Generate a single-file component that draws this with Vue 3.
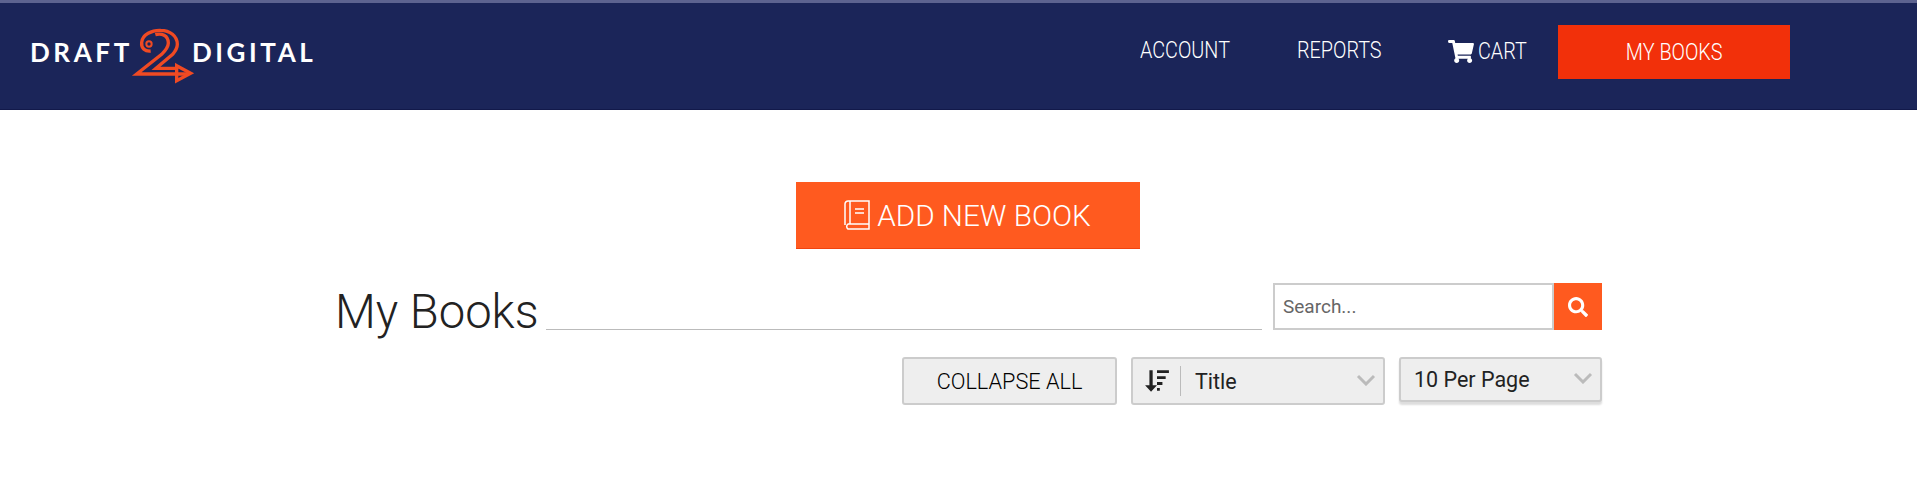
<template>
  <div class="page">
    <header class="navbar">
      <a class="logo" href="#">
        <span class="logo-word">DRAFT</span>
        <svg class="logo-mark" viewBox="0 0 240 210" width="80" height="70" fill="none" stroke="#f04a23" stroke-width="10">
          <circle cx="87" cy="75" r="8" stroke-width="6" />
          <path d="M92 96C76 98 63 88 65 70C67 46 96 33 122 34C150 34 172 52 172 76C172 90 165 98 158 106L108 148H170" />
          <path d="M106 47C124 42 145 48 145 72C145 86 135 96 125 106L50 165H205" />
          <path d="M170 140L212 163L170 185Z" />
        </svg>
        <span class="logo-word">DIGITAL</span>
      </a>
      <nav class="nav-links">
        <a class="nav-link" href="#"><span class="squeeze">ACCOUNT</span></a>
        <a class="nav-link" href="#"><span class="squeeze">REPORTS</span></a>
        <a class="nav-link cart" href="#">
          <svg viewBox="0 0 576 512" width="26" height="23" fill="#fff"><path :d="cartPath" /></svg>
          <span class="squeeze">CART</span>
        </a>
        <a class="my-books" href="#"><span class="squeeze center">MY BOOKS</span></a>
      </nav>
    </header>

    <main class="content">
      <div class="add-row">
        <button class="add-btn">
          <svg viewBox="0 0 26 30" width="26" height="30" fill="none" stroke="#fff" stroke-width="1.5">
            <path d="M1 25V4a3 3 0 0 1 3-3h21v23H4a3 3 0 0 0 0 5h21v-5" />
            <path d="M6 1v23" />
            <path d="M11 9h9M11 13h9" />
          </svg>
          ADD NEW BOOK
        </button>
      </div>

      <div class="title-row">
        <h1 class="title">My Books</h1>
        <div class="title-line"></div>
        <div class="search">
          <input class="search-input" type="text" placeholder="Search..." />
          <button class="search-btn">
            <svg viewBox="0 0 512 512" width="20" height="20" fill="#fff"><path :d="searchPath" /></svg>
          </button>
        </div>
      </div>

      <div class="controls">
        <button class="collapse-btn">COLLAPSE ALL</button>
        <div class="select-box sort">
          <span class="sort-icon">
            <svg viewBox="0 0 24 22" width="26" height="24" fill="#222">
              <path d="M5 1h3v14h4l-5.5 6L1 15h4z" />
              <path d="M12 1h11v2.6H12zM12 6.5h8v2.6h-8zM12 12h5v2.6h-5zM12 17.5h2.6v2.6H12z" />
            </svg>
          </span>
          <span class="select-text">Title</span>
          <svg class="chevron" viewBox="0 0 20 12" width="20" height="12" fill="none" stroke="#bbb" stroke-width="3"><path d="M2 2l8 8 8-8" /></svg>
        </div>
        <div class="select-box per-page">
          <span class="select-text">10 Per Page</span>
          <svg class="chevron" viewBox="0 0 20 12" width="20" height="12" fill="none" stroke="#bbb" stroke-width="3"><path d="M2 2l8 8 8-8" /></svg>
        </div>
      </div>
    </main>
  </div>
</template>

<script setup>
const cartPath = 'M528.12 301.319l47.273-208C578.806 78.301 567.391 64 551.99 64H159.208l-9.166-44.81C147.758 8.021 137.93 0 126.529 0H24C10.745 0 0 10.745 0 24v16c0 13.255 10.745 24 24 24h69.883l70.248 343.435C147.325 417.1 136 435.222 136 456c0 30.928 25.072 56 56 56s56-25.072 56-56c0-15.674-6.447-29.835-16.824-40h209.647C430.447 426.165 424 440.326 424 456c0 30.928 25.072 56 56 56s56-25.072 56-56c0-22.172-12.888-41.332-31.579-50.405l5.517-24.276c3.413-15.018-8.002-29.319-23.403-29.319H218.117l-6.545-32h293.145c11.206 0 20.92-7.754 23.403-18.681z'
const searchPath = 'M505 442.7L405.3 343c-4.5-4.5-10.6-7-17-7H372c27.6-35.3 44-79.7 44-128C416 93.1 322.9 0 208 0S0 93.1 0 208s93.1 208 208 208c48.3 0 92.7-16.4 128-44v16.3c0 6.4 2.5 12.5 7 17l99.7 99.7c9.4 9.4 24.6 9.4 33.9 0l28.3-28.3c9.4-9.4 9.4-24.6.1-34zM208 336c-70.7 0-128-57.2-128-128 0-70.7 57.2-128 128-128 70.7 0 128 57.2 128 128 0 70.7-57.2 128-128 128z'
</script>

<style>
html, body {
  background: #fff;
}
</style>

<style scoped>
.page {
  font-family: Roboto, "Liberation Sans", sans-serif;
  color: #222;
  height: 484px;
  overflow: hidden;
}
.navbar {
  height: 106px;
  border-top: 3px solid #5d6390;
  border-bottom: 1px solid #12194a;
  background: #1b2559;
  display: flex;
  align-items: flex-start;
  justify-content: space-between;
  padding: 0 127px 0 30px;
}
.logo {
  display: flex;
  align-items: flex-start;
  text-decoration: none;
  margin-top: 16px;
}
.logo-word {
  font-family: Lato, sans-serif;
  font-weight: 700;
  font-size: 26px;
  letter-spacing: 3.6px;
  line-height: 26px;
  margin-top: 20px;
  color: #fff;
}
.logo-mark {
  margin: 0 -8px 0 -13px;
}
.nav-links {
  display: flex;
  align-items: center;
  margin-top: 22px;
}
.nav-link {
  color: #fff;
  text-decoration: none;
  font-size: 23px;
  font-weight: 300;
  margin-right: 52.5px;
  margin-top: -4px;
  display: flex;
  align-items: center;
  gap: 4px;
}
.squeeze {
  display: inline-block;
  transform: scaleX(.86);
  transform-origin: left center;
}
.squeeze.center {
  transform-origin: center;
}
.cart {
  margin-right: 23px;
  margin-top: -2px;
}
.my-books {
  width: 232px;
  height: 54px;
  background: #f2300a;
  color: #fff;
  font-size: 23px;
  font-weight: 300;
  text-decoration: none;
  display: flex;
  align-items: center;
  justify-content: center;
}
.content {
  margin-left: 336px;
  width: 1266px;
}
.add-row {
  display: flex;
  justify-content: center;
  margin: 72px 3px 0 0;
}
.add-btn {
  width: 344px;
  height: 67px;
  border: 0;
  border-bottom: 1px solid #f0430f;
  background: #ff5a1f;
  color: #fff;
  font-family: inherit;
  font-size: 29.7px;
  font-weight: 300;
  display: flex;
  align-items: center;
  justify-content: center;
  gap: 7px;
  padding: 0;
}
.title-row {
  display: flex;
  align-items: flex-end;
  margin-top: 34px;
  height: 47px;
}
.title {
  margin: 0 0 -9px -1px;
  font-size: 47.2px;
  font-weight: 300;
  line-height: 54px;
}
.title-line {
  flex: 1;
  height: 1px;
  background: #bbb;
  margin: 0 11px 0 7px;
}
.search {
  display: flex;
  height: 47px;
}
.search-input {
  width: 281px;
  box-sizing: border-box;
  border: 2px solid #ccc;
  outline: 0;
  padding: 0 8px;
  font-family: inherit;
  font-size: 19px;
  background: #fff;
}
.search-input::placeholder {
  color: #666;
  opacity: 1;
}
.search-btn {
  width: 48px;
  border: 0;
  padding: 0;
  background: #ff5a1f;
  display: flex;
  align-items: center;
  justify-content: center;
}
.controls {
  display: flex;
  justify-content: flex-end;
  align-items: flex-start;
  gap: 14px;
  margin-top: 27px;
}
.collapse-btn {
  width: 215px;
  height: 48px;
  box-sizing: border-box;
  border: 2px solid #ccc;
  border-radius: 3px;
  background: #eee;
  color: #000;
  font-family: inherit;
  font-size: 21.7px;
  font-weight: 300;
  padding: 0;
}
.select-box {
  box-sizing: border-box;
  height: 48px;
  border: 2px solid #ccc;
  border-radius: 3px;
  background: #eee;
  display: flex;
  align-items: center;
  font-size: 21.5px;
  position: relative;
}
.sort {
  width: 254px;
}
.per-page {
  width: 203px;
  height: 45px;
  box-shadow: 0 3px 2px #ddd;
}
.sort-icon {
  height: 30px;
  width: 48px;
  box-sizing: border-box;
  border-right: 1px solid #bbb;
  display: flex;
  align-items: center;
  justify-content: center;
  margin-right: 14px;
}
.per-page .select-text {
  margin-left: 13px;
}
.chevron {
  position: absolute;
  right: 7px;
  top: 15px;
}
.per-page .chevron {
  top: 13px;
}
</style>
